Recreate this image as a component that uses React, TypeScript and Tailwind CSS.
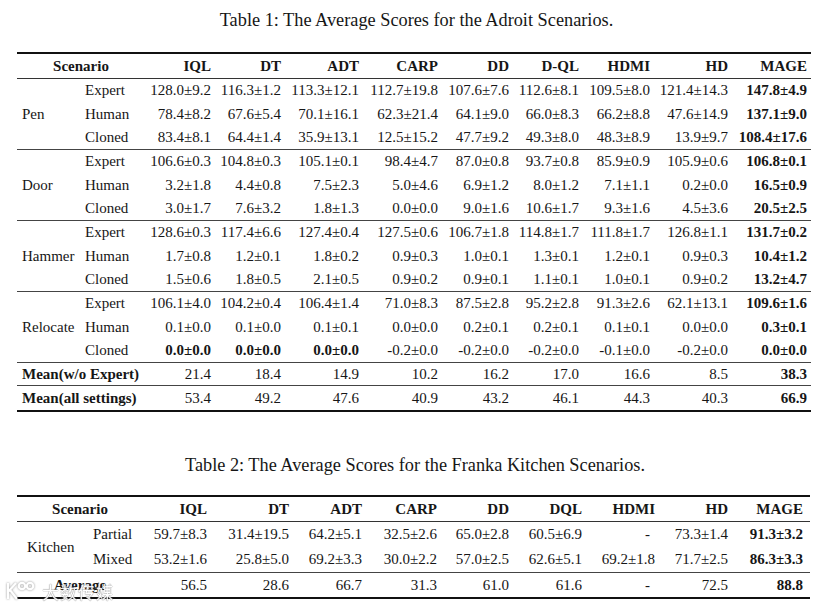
const C1 = "grid grid-cols-[65px_58px_75px_70px_78px_79px_71px_70px_71px_78px_79px]";
const C2 = "grid grid-cols-[71px_52px_71px_82px_73px_75px_72px_73px_73px_73px_78px]";

const heads1 = ["IQL", "DT", "ADT", "CARP", "DD", "D-QL", "HDMI", "HD", "MAGE"];
const heads2 = ["IQL", "DT", "ADT", "CARP", "DD", "DQL", "HDMI", "HD", "MAGE"];

// "!" in front of a value marks it bold
const adroit = [
  {
    name: "Pen",
    rows: [
      ["Expert", "128.0±9.2", "116.3±1.2", "113.3±12.1", "112.7±19.8", "107.6±7.6", "112.6±8.1", "109.5±8.0", "121.4±14.3", "147.8±4.9"],
      ["Human", "78.4±8.2", "67.6±5.4", "70.1±16.1", "62.3±21.4", "64.1±9.0", "66.0±8.3", "66.2±8.8", "47.6±14.9", "137.1±9.0"],
      ["Cloned", "83.4±8.1", "64.4±1.4", "35.9±13.1", "12.5±15.2", "47.7±9.2", "49.3±8.0", "48.3±8.9", "13.9±9.7", "108.4±17.6"],
    ],
  },
  {
    name: "Door",
    rows: [
      ["Expert", "106.6±0.3", "104.8±0.3", "105.1±0.1", "98.4±4.7", "87.0±0.8", "93.7±0.8", "85.9±0.9", "105.9±0.6", "106.8±0.1"],
      ["Human", "3.2±1.8", "4.4±0.8", "7.5±2.3", "5.0±4.6", "6.9±1.2", "8.0±1.2", "7.1±1.1", "0.2±0.0", "16.5±0.9"],
      ["Cloned", "3.0±1.7", "7.6±3.2", "1.8±1.3", "0.0±0.0", "9.0±1.6", "10.6±1.7", "9.3±1.6", "4.5±3.6", "20.5±2.5"],
    ],
  },
  {
    name: "Hammer",
    rows: [
      ["Expert", "128.6±0.3", "117.4±6.6", "127.4±0.4", "127.5±0.6", "106.7±1.8", "114.8±1.7", "111.8±1.7", "126.8±1.1", "131.7±0.2"],
      ["Human", "1.7±0.8", "1.2±0.1", "1.8±0.2", "0.9±0.3", "1.0±0.1", "1.3±0.1", "1.2±0.1", "0.9±0.3", "10.4±1.2"],
      ["Cloned", "1.5±0.6", "1.8±0.5", "2.1±0.5", "0.9±0.2", "0.9±0.1", "1.1±0.1", "1.0±0.1", "0.9±0.2", "13.2±4.7"],
    ],
  },
  {
    name: "Relocate",
    rows: [
      ["Expert", "106.1±4.0", "104.2±0.4", "106.4±1.4", "71.0±8.3", "87.5±2.8", "95.2±2.8", "91.3±2.6", "62.1±13.1", "109.6±1.6"],
      ["Human", "0.1±0.0", "0.1±0.0", "0.1±0.1", "0.0±0.0", "0.2±0.1", "0.2±0.1", "0.1±0.1", "0.0±0.0", "0.3±0.1"],
      ["Cloned", "!0.0±0.0", "!0.0±0.0", "!0.0±0.0", "-0.2±0.0", "-0.2±0.0", "-0.2±0.0", "-0.1±0.0", "-0.2±0.0", "0.0±0.0"],
    ],
  },
];

const means = [
  ["Mean(w/o Expert)", "21.4", "18.4", "14.9", "10.2", "16.2", "17.0", "16.6", "8.5", "38.3"],
  ["Mean(all settings)", "53.4", "49.2", "47.6", "40.9", "43.2", "46.1", "44.3", "40.3", "66.9"],
];

const kitchen = [
  ["Partial", "59.7±8.3", "31.4±19.5", "64.2±5.1", "32.5±2.6", "65.0±2.8", "60.5±6.9", "-", "73.3±1.4", "91.3±3.2"],
  ["Mixed", "53.2±1.6", "25.8±5.0", "69.2±3.3", "30.0±2.2", "57.0±2.5", "62.6±5.1", "69.2±1.8", "71.7±2.5", "86.3±3.3"],
];
const kitchenAvg = ["56.5", "28.6", "66.7", "31.3", "61.0", "61.6", "-", "72.5", "88.8"];

function Val({ v, last, pad }: { v: string; last: boolean; pad: string }) {
  const bold = last || v.startsWith("!");
  const text = v.replace("!", "");
  return (
    <div className={`flex items-center justify-end ${pad} ${bold ? "font-bold" : ""}`}>
      <span className={text === "-" ? "mr-[5px]" : ""}>{text}</span>
    </div>
  );
}

function AdroitTable() {
  return (
    <div className="mx-[17px] w-[794px] border-t-2 border-b-2 border-[#111]">
      <div className={`${C1} h-[25px] border-b border-[#333] font-bold`}>
        <div className="col-span-2 flex items-center justify-center pl-[5px]">Scenario</div>
        {heads1.map((h) => (
          <div key={h} className="flex items-center justify-end pr-[4px]">{h}</div>
        ))}
      </div>
      {adroit.map((g) => (
        <div key={g.name} className={`${C1} grid-rows-[23px_24px_23px] border-b border-[#444]`}>
          <div className="row-span-3 flex items-center pl-[5px]">{g.name}</div>
          {g.rows.map((r) => [
            <div key={r[0]} className="flex items-center pl-[3px]">{r[0]}</div>,
            ...r.slice(1).map((v, i) => <Val key={r[0] + i} v={v} last={i === 8} pad="pr-[4px]" />),
          ])}
        </div>
      ))}
      {means.map((r, k) => (
        <div key={r[0]} className={`${C1} ${k === 0 ? "h-[23px] border-b border-[#444]" : "h-[24px]"}`}>
          <div className="col-span-2 flex items-center pl-[5px] font-bold">{r[0]}</div>
          {r.slice(1).map((v, i) => (
            <Val key={i} v={v} last={i === 8} pad="pr-[4px]" />
          ))}
        </div>
      ))}
    </div>
  );
}

function KitchenTable() {
  return (
    <div className="mx-[17px] w-[793px] border-t-2 border-b-2 border-[#111]">
      <div className={`${C2} h-[25px] border-b border-[#333] font-bold`}>
        <div className="col-span-2 flex items-center justify-center pl-[3px]">Scenario</div>
        {heads2.map((h, i) => (
          <div key={h} className={`flex items-center justify-end ${i === 8 ? "pr-[7px]" : "pr-[4px]"}`}>{h}</div>
        ))}
      </div>
      <div className={`${C2} grid-rows-[25px_25px] border-b border-[#444]`}>
        <div className="row-span-2 flex items-center pl-[10px]">Kitchen</div>
        {kitchen.map((r) => [
          <div key={r[0]} className="flex items-center pl-[5px]">{r[0]}</div>,
          ...r.slice(1).map((v, i) => (
            <Val key={r[0] + i} v={v} last={i === 8} pad={i === 8 ? "pr-[7px]" : "pr-[4px]"} />
          )),
        ])}
      </div>
      <div className={`${C2} h-[24px]`}>
        <div className="col-span-2 flex items-center justify-center pl-[3px] font-bold">Average</div>
        {kitchenAvg.map((v, i) => (
          <Val key={i} v={v} last={i === 8} pad={i === 8 ? "pr-[7px]" : "pr-[4px]"} />
        ))}
      </div>
    </div>
  );
}

export default function App() {
  return (
    <div className="relative w-[830px] h-[611px] overflow-hidden bg-white text-[#161616] text-[15px] font-['Liberation_Serif','Times_New_Roman',serif]">
      <div className="pt-[10px] h-[30px] leading-[20px] text-[18.3px] text-center pl-[3px]">
        Table 1: The Average Scores for the Adroit Scenarios.
      </div>
      <div className="mt-[22px]">
        <AdroitTable />
      </div>
      <div className="mt-[43px] h-[20px] leading-[20px] text-[18.3px] text-center">
        Table 2: The Average Scores for the Franka Kitchen Scenarios.
      </div>
      <div className="mt-[20px]">
        <KitchenTable />
      </div>

      {/* watermark */}
      <div className="absolute left-[4px] top-[580px] flex items-center gap-[4px] opacity-90">
        <svg width="34" height="22" viewBox="0 0 34 22" fill="none" stroke="#fff" strokeWidth="2.2">
          <g style={{ filter: "drop-shadow(0 0 1px #888)" }}>
            <path d="M4 3v16M4 12l8-9M6 10l7 9" />
            <circle cx="18" cy="6" r="3.2" />
            <circle cx="26" cy="6" r="3.2" />
          </g>
        </svg>
        <span className="text-[17px] leading-none tracking-[1px] text-white font-['Noto_Sans_CJK_SC',sans-serif] [text-shadow:0_0_1px_#777,0_0_1px_#777]">
          大数传媒
        </span>
      </div>
    </div>
  );
}
